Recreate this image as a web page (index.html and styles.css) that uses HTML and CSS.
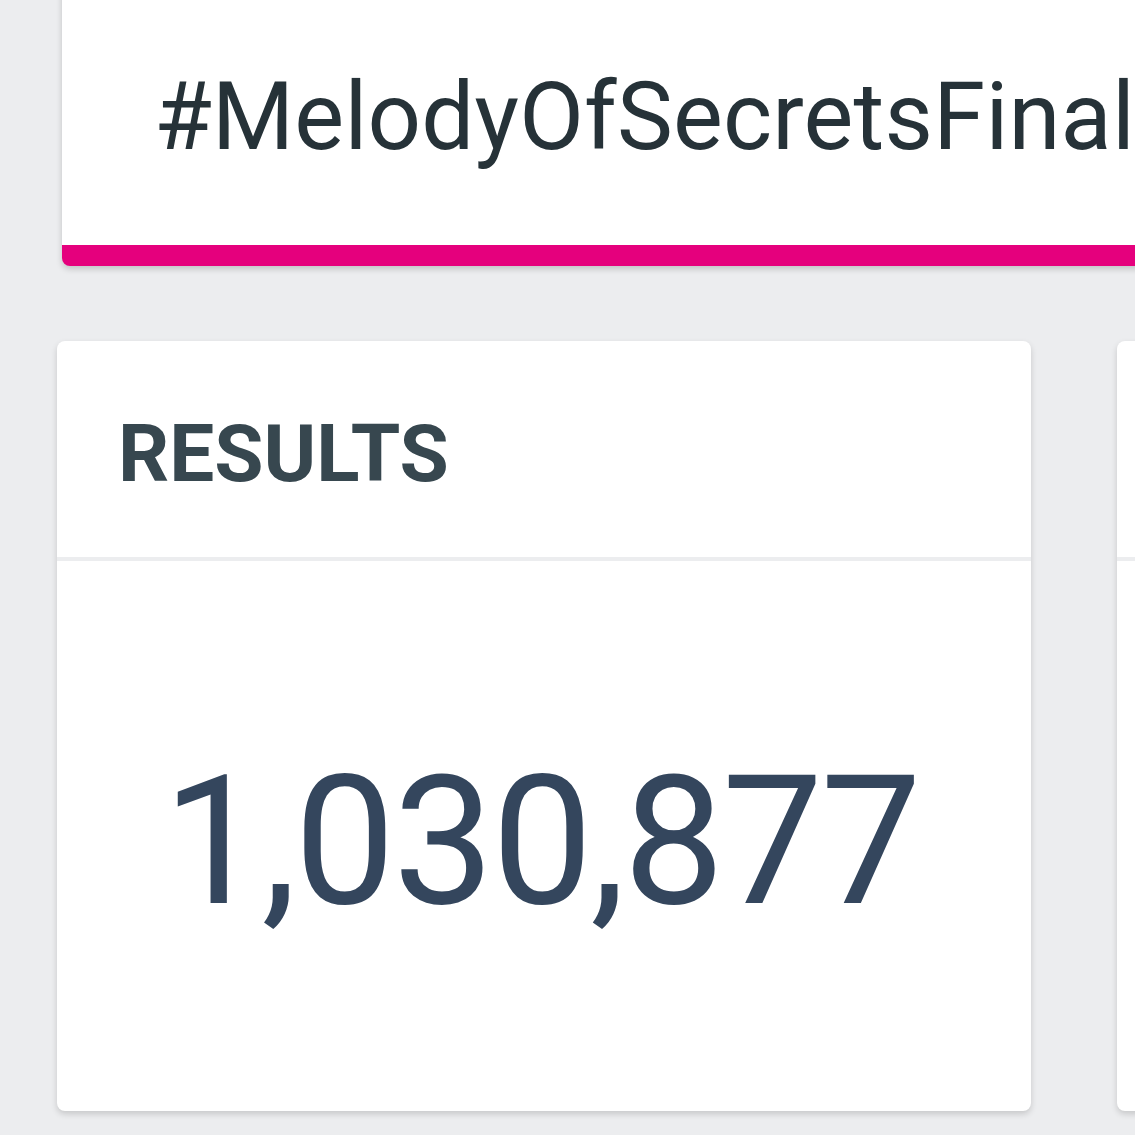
FILE: index.html
```html
<!DOCTYPE html>
<html lang="en">

<head>
    <meta charset="UTF-8">
    <title>Results</title>
    <link rel="stylesheet" href="styles.css">
</head>

<body>
    <div class="page">
        <div class="tag-card">
            <div class="tag-text">#MelodyOfSecretsFinal</div>
        </div>

        <div class="stats-row">
            <div class="stat-card">
                <div class="stat-head">RESULTS</div>
                <div class="stat-body">1,030,877</div>
            </div>
            <div class="stat-card">
                <div class="stat-head">&nbsp;</div>
                <div class="stat-body">&nbsp;</div>
            </div>
        </div>
    </div>
</body>

</html>
```

FILE: styles.css
```css
body {
    margin: 0;
    background-color: #ECEDEF;
    font-family: Roboto, "Liberation Sans", sans-serif;
}

.page {
    width: 1135px;
    height: 1135px;
    overflow: hidden;
}

.tag-card {
    margin-top: -40px;
    margin-left: 62px;
    width: 1200px;
    height: 175px;
    padding: 110px 0 0 92px;
    background-color: #FFFFFF;
    border-bottom: 21px solid #E5007D;
    border-radius: 0 0 8px 8px;
    box-shadow: 0 3px 6px rgba(0, 0, 0, 0.18);
}

.tag-text {
    font-size: 94px;
    line-height: 94px;
    letter-spacing: 0.2px;
    color: #263238;
    white-space: nowrap;
}

.stats-row {
    display: flex;
    gap: 86px;
    margin-top: 75px;
    margin-left: 57px;
}

.stat-card {
    flex: 0 0 974px;
    height: 770px;
    display: flex;
    flex-direction: column;
    background-color: #FFFFFF;
    border-radius: 8px;
    box-shadow: 0 3px 6px rgba(0, 0, 0, 0.16);
}

.stat-head {
    height: 80px;
    padding: 73px 0 63px 61px;
    border-bottom: 4px solid #ECEDEF;
    font-size: 80px;
    line-height: 80px;
    font-weight: bold;
    color: #37474F;
}

.stat-body {
    flex: 1;
    display: flex;
    justify-content: center;
    align-items: center;
    padding-top: 10px;
    padding-right: 6px;
    font-size: 180px;
    letter-spacing: -2.5px;
    color: #34465D;
}
```
